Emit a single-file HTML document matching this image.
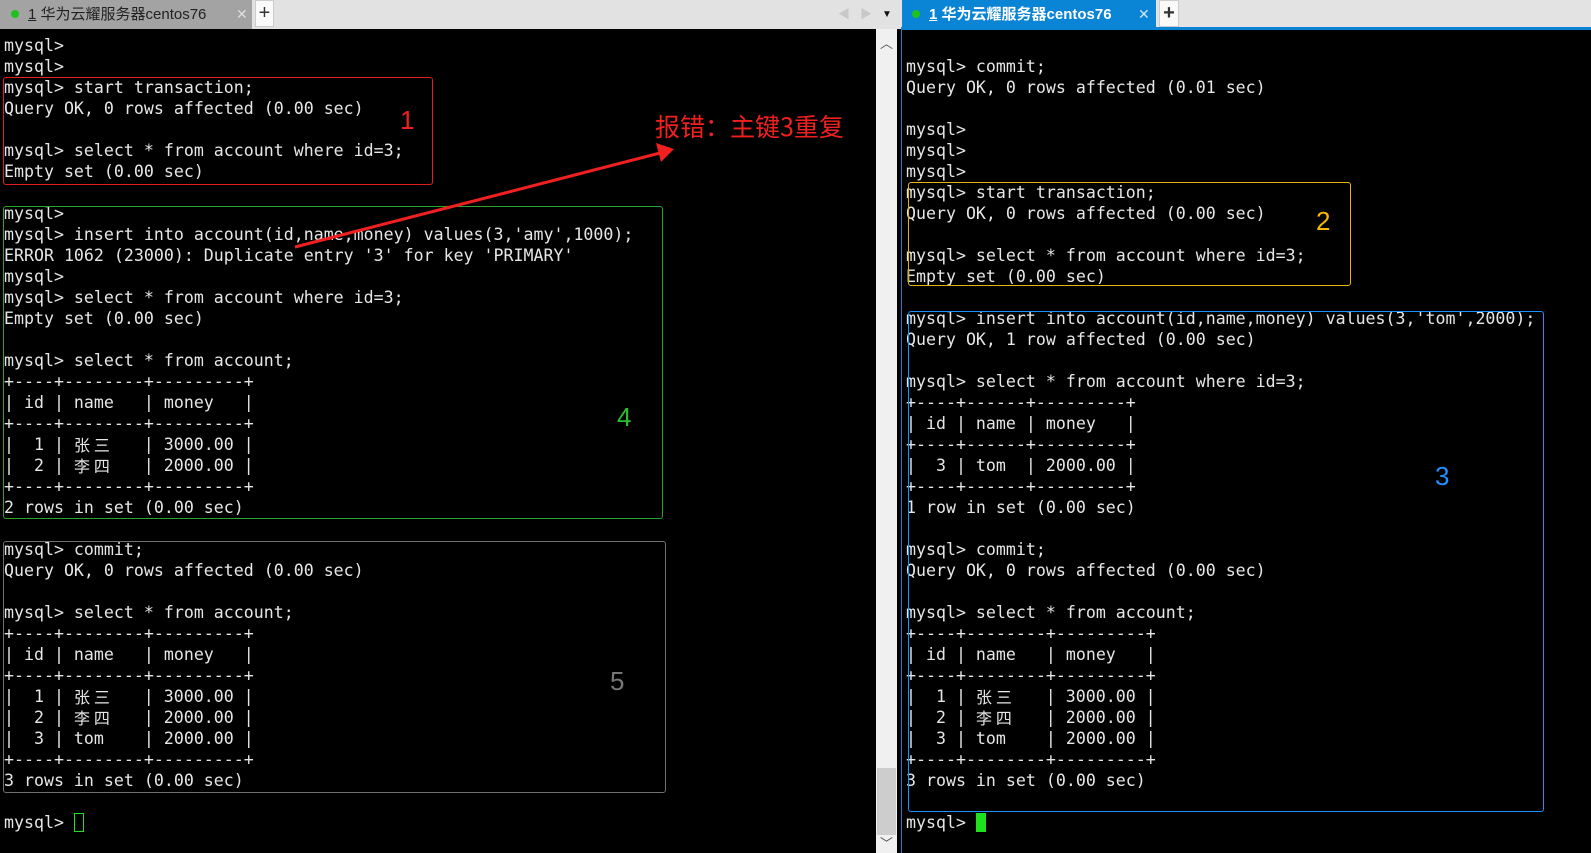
<!DOCTYPE html>
<html><head><meta charset="utf-8"><style>
*{margin:0;padding:0;box-sizing:border-box}
body{width:1591px;height:853px;background:#000;position:relative;overflow:hidden;font-family:"DejaVu Sans Mono","Liberation Mono","Noto Sans CJK SC",monospace}
.abs{position:absolute}
.term{position:absolute;top:35px;font-size:16.6px;line-height:21px;color:#e6e6e6;white-space:pre}
.term i{font-style:normal;display:inline-block;width:19.95px;font-family:"Noto Sans CJK SC","WenQuanYi Zen Hei",sans-serif;font-size:16px;line-height:21px;vertical-align:top}
.box{position:absolute;border-radius:3px}
.lbl{position:absolute;font-family:"Liberation Sans",sans-serif;font-size:26px;line-height:26px}
.tab{position:absolute;top:0;height:29px;font-family:"Liberation Sans","Noto Sans CJK SC",sans-serif;font-size:15px;line-height:29px;white-space:nowrap}
</style></head><body>
<div class="abs" style="left:0;top:0;width:901px;height:29px;background:#e2e2e2"></div>
<div class="tab" style="left:0;width:252px;background:#a3a3a3;color:#222;padding-left:11px"><span style="display:inline-block;width:8px;height:8px;border-radius:50%;background:#1ec21e;margin-right:9px;vertical-align:1px"></span><u>1</u> 华为云耀服务器centos76<span style="position:absolute;left:236px;color:#ddd;font-size:14px">✕</span></div>
<div class="tab" style="left:255px;width:19px;background:#fafafa;color:#333;text-align:center;font-size:20px;border:1px solid #ccc;height:27px;line-height:25px">+</div>
<div class="tab" style="left:838px;color:#c8c8c8;font-size:12px">◀&nbsp;&nbsp;&nbsp;▶</div>
<div class="tab" style="left:882px;color:#111;font-size:10px">▼</div>
<div class="abs" style="left:901px;top:0;width:690px;height:28px;background:#e3e3e3"></div>
<div class="abs" style="left:901px;top:27px;width:690px;height:3px;background:#0a84d4"></div>
<div class="tab" style="left:902px;width:254px;background:#0a84d4;color:#fff;font-weight:bold;padding-left:10px"><span style="display:inline-block;width:8px;height:8px;border-radius:50%;background:#1ec21e;margin-right:9px;vertical-align:1px"></span><u>1</u> 华为云耀服务器centos76<span style="position:absolute;left:236px;color:#cfe6f7;font-size:14px;font-weight:normal">✕</span></div>
<div class="tab" style="left:1159px;width:20px;background:#fafafa;color:#333;text-align:center;font-size:20px;font-weight:bold;border:1px solid #ccc;height:27px;line-height:25px">+</div>
<div class="abs" style="left:876px;top:29px;width:21px;height:824px;background:#f0f0f0"></div>
<div class="abs" style="left:877px;top:768px;width:19px;height:67px;background:#cdcdcd"></div>
<div class="abs" style="left:880px;top:33px;color:#555;font-size:13px;font-family:'DejaVu Sans'">︿</div>
<div class="abs" style="left:880px;top:833px;color:#555;font-size:13px;font-family:'DejaVu Sans'">﹀</div>
<div class="abs" style="left:901px;top:29px;width:1px;height:824px;background:#0a84d4"></div>

<div class="term" style="left:4px">mysql>
mysql>
mysql> start transaction;
Query OK, 0 rows affected (0.00 sec)

mysql> select * from account where id=3;
Empty set (0.00 sec)

mysql>
mysql> insert into account(id,name,money) values(3,'amy',1000);
ERROR 1062 (23000): Duplicate entry '3' for key 'PRIMARY'
mysql>
mysql> select * from account where id=3;
Empty set (0.00 sec)

mysql> select * from account;
+----+--------+---------+
| id | name   | money   |
+----+--------+---------+
|  1 | <i>张</i><i>三</i>   | 3000.00 |
|  2 | <i>李</i><i>四</i>   | 2000.00 |
+----+--------+---------+
2 rows in set (0.00 sec)

mysql> commit;
Query OK, 0 rows affected (0.00 sec)

mysql> select * from account;
+----+--------+---------+
| id | name   | money   |
+----+--------+---------+
|  1 | <i>张</i><i>三</i>   | 3000.00 |
|  2 | <i>李</i><i>四</i>   | 2000.00 |
|  3 | tom    | 2000.00 |
+----+--------+---------+
3 rows in set (0.00 sec)

mysql> <span style="display:inline-block;width:10px;height:19px;border:1px solid #1ee01e;vertical-align:-4px"></span></div>

<div class="term" style="left:906px">
mysql> commit;
Query OK, 0 rows affected (0.01 sec)

mysql>
mysql>
mysql>
mysql> start transaction;
Query OK, 0 rows affected (0.00 sec)

mysql> select * from account where id=3;
Empty set (0.00 sec)

mysql> insert into account(id,name,money) values(3,'tom',2000);
Query OK, 1 row affected (0.00 sec)

mysql> select * from account where id=3;
+----+------+---------+
| id | name | money   |
+----+------+---------+
|  3 | tom  | 2000.00 |
+----+------+---------+
1 row in set (0.00 sec)

mysql> commit;
Query OK, 0 rows affected (0.00 sec)

mysql> select * from account;
+----+--------+---------+
| id | name   | money   |
+----+--------+---------+
|  1 | <i>张</i><i>三</i>   | 3000.00 |
|  2 | <i>李</i><i>四</i>   | 2000.00 |
|  3 | tom    | 2000.00 |
+----+--------+---------+
3 rows in set (0.00 sec)

mysql> <span style="display:inline-block;width:10px;height:19px;background:#1ee01e;vertical-align:-4px"></span></div>

<div class="box" style="left:3px;top:77px;width:430px;height:108px;border:1px solid #e02020"></div>
<div class="lbl" style="left:400px;top:107px;color:#f02020">1</div>
<div class="box" style="left:3px;top:206px;width:660px;height:313px;border:1px solid #2aa52a"></div>
<div class="lbl" style="left:617px;top:404px;color:#2ac02a">4</div>
<div class="box" style="left:3px;top:541px;width:663px;height:252px;border:1px solid #707070"></div>
<div class="lbl" style="left:610px;top:668px;color:#777">5</div>
<div class="box" style="left:908px;top:182px;width:443px;height:104px;border:1px solid #e8b010"></div>
<div class="lbl" style="left:1316px;top:208px;color:#f5b800">2</div>
<div class="box" style="left:908px;top:311px;width:636px;height:501px;border:1px solid #1e90ff"></div>
<div class="lbl" style="left:1435px;top:463px;color:#1e90ff">3</div>
<div class="abs" style="left:655px;top:111px;color:#f02020;font-size:25px;line-height:30px;font-family:'Noto Sans CJK SC',sans-serif;white-space:nowrap">报错：主键3重复</div>
<svg class="abs" style="left:0;top:0" width="1591" height="853"><line x1="295" y1="247" x2="664" y2="152" stroke="#f02020" stroke-width="3"/><polygon points="674,149 656,143 661,162" fill="#f02020"/></svg>
</body></html>
